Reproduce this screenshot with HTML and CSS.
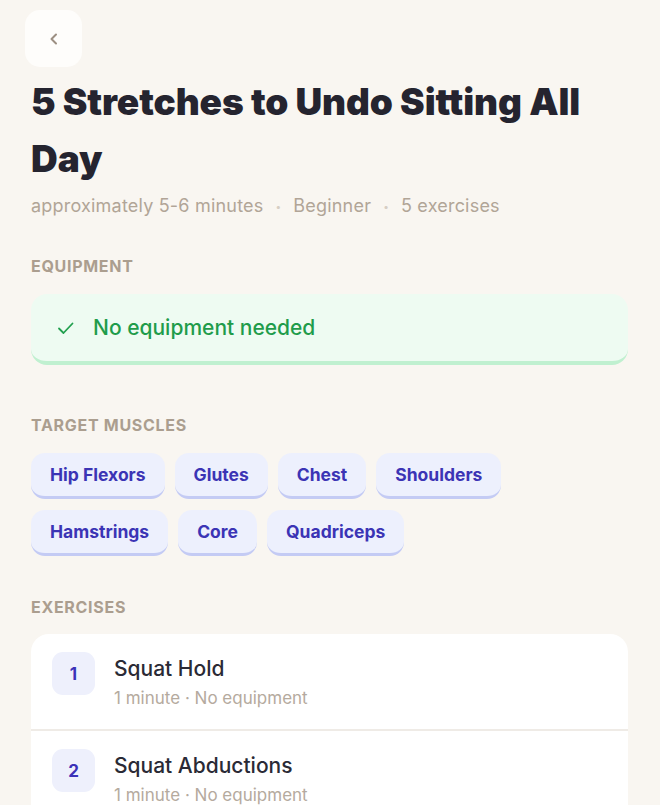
FILE: index.html
```html
<!DOCTYPE html>
<html lang="en">
<head>
<meta charset="utf-8">
<title>5 Stretches to Undo Sitting All Day</title>
<link rel="stylesheet" href="styles.css">
</head>
<body>
<main class="page">
  <button class="back" aria-label="Back">
    <svg width="14" height="14" viewBox="0 0 14 14"><path d="M9 2.5 L4.5 7 L9 11.5" fill="none" stroke="#9c8f82" stroke-width="2" stroke-linecap="round" stroke-linejoin="round"/></svg>
  </button>
  <h1 class="title">5 Stretches to Undo Sitting All Day</h1>
  <div class="meta">
    <span>approximately 5-6 minutes</span>
    <span class="dot">•</span>
    <span>Beginner</span>
    <span class="dot">•</span>
    <span>5 exercises</span>
  </div>

  <h2 class="label">Equipment</h2>
  <div class="equip">
    <svg width="20" height="20" viewBox="0 0 20 20"><path d="M3 10.5 L7.5 15 L16.5 5.5" fill="none" stroke="#22a04f" stroke-width="1.8" stroke-linecap="round" stroke-linejoin="round"/></svg>
    <span>No equipment needed</span>
  </div>

  <h2 class="label">Target Muscles</h2>
  <div class="chips">
    <span class="chip">Hip Flexors</span>
    <span class="chip">Glutes</span>
    <span class="chip">Chest</span>
    <span class="chip">Shoulders</span>
    <span class="chip">Hamstrings</span>
    <span class="chip">Core</span>
    <span class="chip">Quadriceps</span>
  </div>

  <h2 class="label">Exercises</h2>
  <div class="card">
    <div class="row">
      <div class="num">1</div>
      <div class="info">
        <div class="name">Squat Hold</div>
        <div class="sub">1 minute · No equipment</div>
      </div>
    </div>
    <div class="row">
      <div class="num">2</div>
      <div class="info">
        <div class="name">Squat Abductions</div>
        <div class="sub">1 minute · No equipment</div>
      </div>
    </div>
  </div>
</main>
</body>
</html>
```

FILE: styles.css
```css
* { box-sizing: border-box; }
html, body { margin: 0; padding: 0; }
body {
  background: #f9f6f1;
  font-family: "Inter", "Noto Sans", sans-serif;
  color: #25242f;
  overflow: hidden;
}
.page {
  padding: 10px 32px 0 31px;
  display: flex;
  flex-direction: column;
}
.back {
  width: 57px;
  height: 57px;
  margin-left: -6px;
  border: none;
  border-radius: 15px;
  background: #fefdfb;
  display: flex;
  align-items: center;
  justify-content: center;
  padding: 0;
}
.title {
  margin: 6px 0 0;
  font-size: 37px;
  font-weight: 900;
  line-height: 57px;
  color: #25242f;
  letter-spacing: -0.1px;
}
.meta {
  margin-top: 7px;
  display: flex;
  align-items: center;
  gap: 12px;
  font-size: 18px;
  letter-spacing: 0.2px;
  color: #b1a597;
  line-height: 24px;
}
.meta .dot {
  font-size: 10px;
  color: #d6cec4;
}
.label {
  margin: 38px 0 0;
  font-size: 16px;
  font-weight: 700;
  text-transform: uppercase;
  letter-spacing: 0.7px;
  color: #ab9e8f;
  line-height: 20px;
}
.equip {
  margin-top: 18px;
  height: 71px;
  background: #eefbf2;
  border-radius: 16px;
  border-bottom: 4px solid #c0f0d0;
  display: flex;
  align-items: center;
  gap: 17px;
  padding: 0 0 0 25px;
  font-size: 21px;
  font-weight: 500;
  color: #1f9c4b;
}
.equip + .label { margin-top: 50px; }
.chips {
  margin-top: 18px;
  display: flex;
  flex-wrap: wrap;
  gap: 11px 10px;
}
.chip {
  height: 46px;
  padding: 0 19px;
  background: #edf0fd;
  border-bottom: 3px solid #c4cbf4;
  border-radius: 14px;
  display: flex;
  align-items: center;
  font-size: 17.5px;
  font-weight: 700;
  color: #3b34b5;
}
.chips + .label { margin-top: 41px; }
.card {
  margin-top: 17px;
  background: #ffffff;
  border-radius: 18px;
  overflow: hidden;
}
.row {
  display: flex;
  gap: 19px;
  padding: 18px 21px 0;
  height: 97px;
  border-bottom: 2px solid #efebe6;
}
.num {
  width: 43px;
  height: 43px;
  flex: none;
  border-radius: 11px;
  background: #eef0fc;
  color: #3b32b8;
  font-weight: 700;
  font-size: 17px;
  display: flex;
  align-items: center;
  justify-content: center;
}
.info { display: flex; flex-direction: column; }
.name {
  font-size: 21px;
  font-weight: 500;
  color: #2a2a35;
  line-height: 30px;
  margin-top: 2px;
}
.sub {
  font-size: 17px;
  color: #b5aa9e;
  line-height: 24px;
  margin-top: 2px;
}
```
